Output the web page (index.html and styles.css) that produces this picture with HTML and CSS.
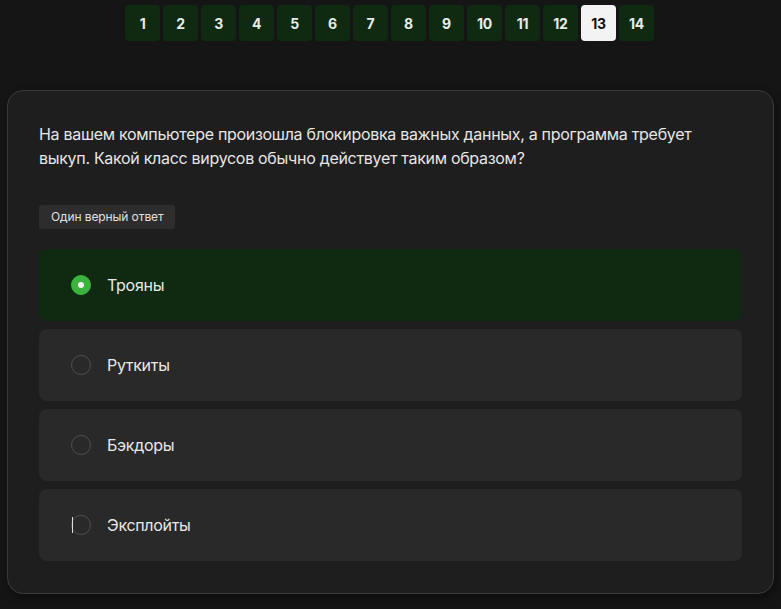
FILE: index.html
```html
<!DOCTYPE html>
<html lang="ru">
<head>
<meta charset="utf-8">
<link rel="stylesheet" href="styles.css">
</head>
<body>
<nav class="pager">
  <span class="pg">1</span><span class="pg">2</span><span class="pg">3</span><span class="pg">4</span><span class="pg">5</span><span class="pg">6</span><span class="pg">7</span><span class="pg">8</span><span class="pg">9</span><span class="pg">10</span><span class="pg">11</span><span class="pg">12</span><span class="pg active">13</span><span class="pg">14</span>
</nav>
<main class="card">
  <p class="question">На вашем компьютере произошла блокировка важных данных, а программа требует выкуп. Какой класс вирусов обычно действует таким образом?</p>
  <span class="badge">Один верный ответ</span>
  <div class="options">
    <div class="option selected"><span class="radio"></span><span class="label">Трояны</span></div>
    <div class="option"><span class="radio"></span><span class="label">Руткиты</span></div>
    <div class="option"><span class="radio"></span><span class="label">Бэкдоры</span></div>
    <div class="option"><span class="radio caret-host"><span class="caret"></span></span><span class="label">Эксплойты</span></div>
  </div>
</main>
</body>
</html>
```
FILE: styles.css
```css
* { box-sizing: border-box; }
html, body { margin: 0; padding: 0; }
body {
  background: #151515;
  font-family: Inter, "Noto Sans", sans-serif;
  color: #e8e8e8;
  padding: 5px 7px 0;
  height: 609px;
  overflow: hidden;
}
.pager {
  display: flex;
  justify-content: center;
  gap: 3px;
  padding-right: 2px;
}
.pg {
  width: 35px;
  height: 36px;
  border-radius: 4px;
  background: #0f2a11;
  color: #e6ece6;
  font-weight: 700;
  font-size: 14px;
  letter-spacing: -0.3px;
  display: flex;
  align-items: center;
  justify-content: center;
}
.pg.active {
  background: #f3f3f3;
  color: #111;
}
.card {
  margin-top: 49px;
  background: #1e1e1e;
  border: 1px solid #3b3b3b;
  border-radius: 16px;
  padding: 31px 31px 32px;
  box-shadow: 2px 4px 10px rgba(0,0,0,0.4);
}
.question {
  margin: 0;
  font-size: 16px;
  line-height: 24px;
  letter-spacing: -0.3px;
  color: #e6e6e6;
}
.badge {
  display: inline-block;
  margin-top: 35px;
  background: #2d2d2d;
  border-radius: 3px;
  font-size: 12px;
  line-height: 24px;
  letter-spacing: -0.1px;
  padding: 0 12px;
  color: #e0e0e0;
}
.options {
  margin-top: 20px;
  display: flex;
  flex-direction: column;
  gap: 8px;
}
.option {
  height: 72px;
  border-radius: 8px;
  background: #292929;
  display: flex;
  align-items: center;
  padding-left: 32px;
  gap: 16px;
}
.option.selected { background: #0f2a11; }
.radio {
  width: 20px;
  height: 20px;
  border-radius: 50%;
  border: 1px solid #4e4e4e;
  flex: none;
  position: relative;
}
.selected .radio {
  background: #3bb43e;
  border-color: #3bb43e;
}
.selected .radio::after {
  content: "";
  position: absolute;
  left: 6px;
  top: 6px;
  width: 6px;
  height: 6px;
  border-radius: 50%;
  background: #f2f2f2;
}
.caret {
  position: absolute;
  left: 0;
  top: 1px;
  width: 1px;
  height: 16px;
  background: #dcdcdc;
}
.label {
  font-size: 16px;
  letter-spacing: -0.3px;
  color: #e8e8e8;
}
```
